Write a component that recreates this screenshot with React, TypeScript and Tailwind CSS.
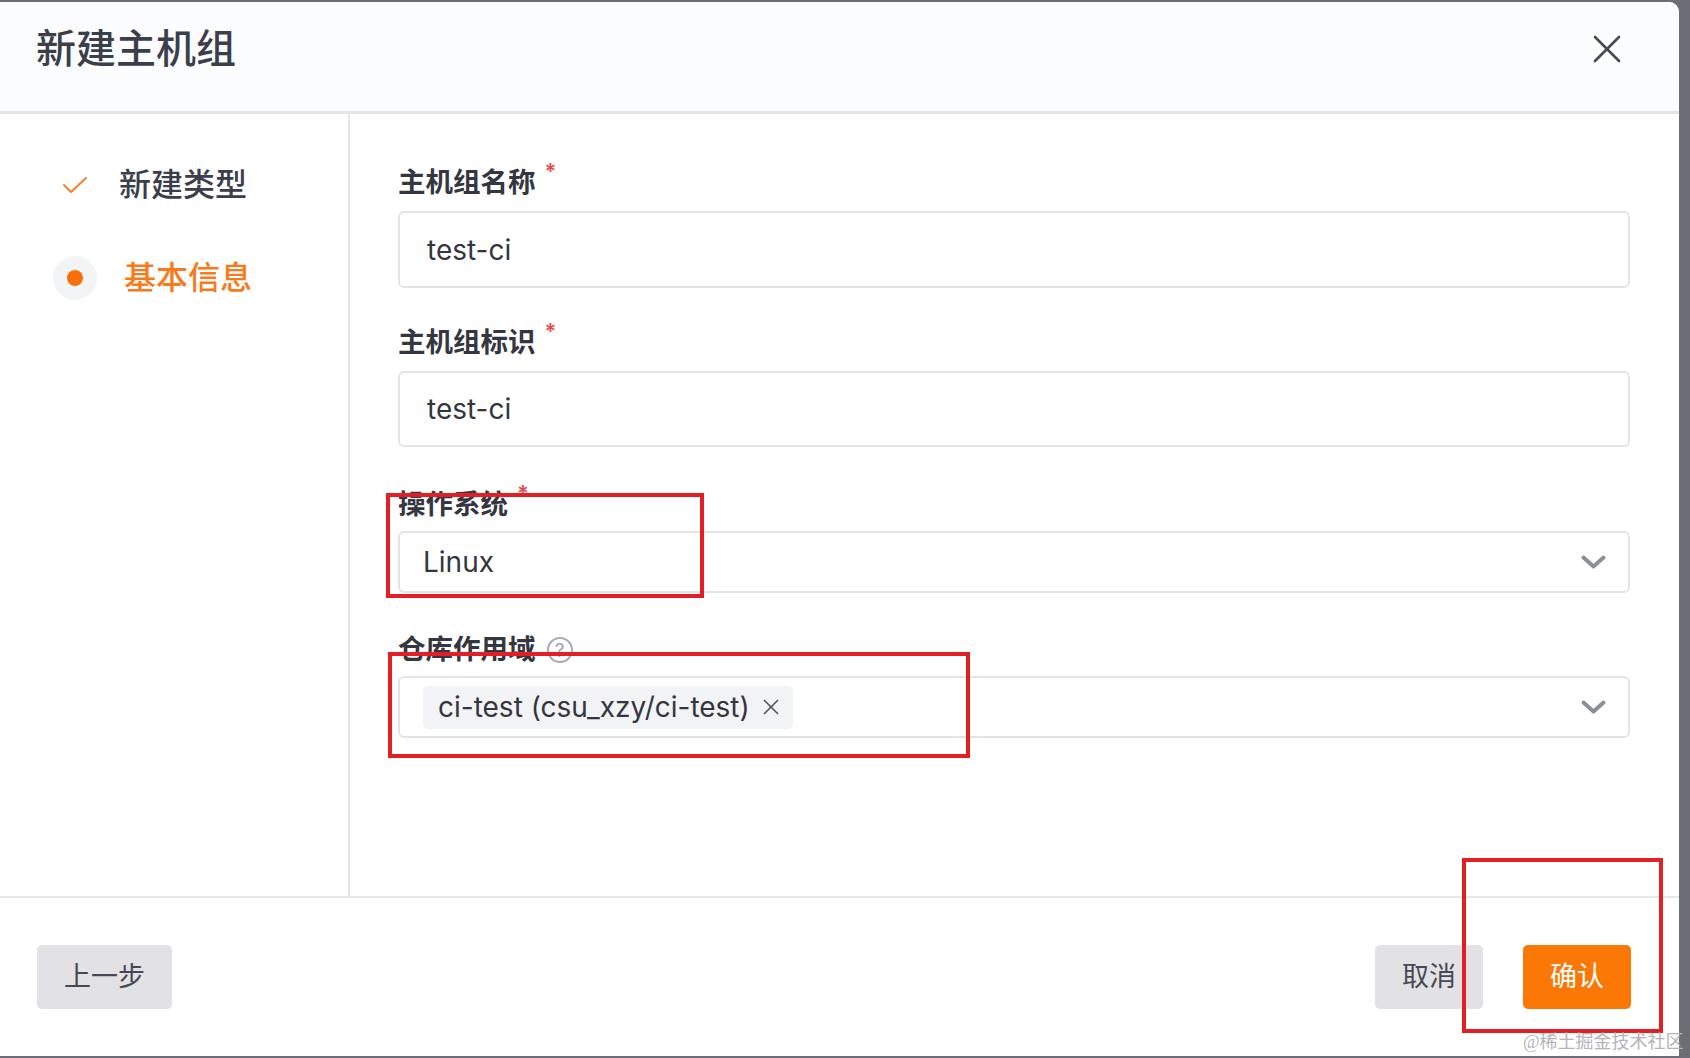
const font = "font-['Inter','Noto_Sans_CJK_SC',sans-serif]";

const Chevron = () => (
  <svg width="27" height="16" viewBox="0 0 27 16" fill="none">
    <polyline points="3.5,3.5 13.5,12.5 23.5,3.5" stroke="#8c8f99" strokeWidth="4" strokeLinecap="round" strokeLinejoin="round" />
  </svg>
);

const Required = () => (
  <span className="ml-[9px] text-[22px] leading-none text-[#e5484d] relative -top-[12px]">*</span>
);

const Label = ({ text, required, help }: { text: string; required?: boolean; help?: boolean }) => (
  <div className="flex items-center h-[40px] text-[27.5px] font-semibold text-[#343640]">
    <span>{text}</span>
    {required && <Required />}
    {help && (
      <span className="ml-[11px] w-[26px] h-[26px] rounded-full border-2 border-[#a9abb2] text-[#a2a4ab] text-[19px] leading-none flex items-center justify-center font-normal">
        ?
      </span>
    )}
  </div>
);

const TextInput = ({ value, h }: { value: string; h: string }) => (
  <div className={`${h} mt-[8px] border-2 border-[#e3e4e6] rounded-[6px] flex items-center pl-[27px] text-[28px] text-[#34363f]`}>
    {value}
  </div>
);

export default function App() {
  return (
    <div className={`${font} relative w-[1690px] h-[1058px] bg-[#6d6e75] overflow-hidden`}>
      <div className="w-[1679px] h-[1054px] mt-[2px] bg-white rounded-tr-[10px] flex flex-col overflow-hidden">
        {/* header */}
        <div className="h-[112px] shrink-0 bg-[#fbfcfd] border-b-[3px] border-[#e4e5e8] flex items-center justify-between pl-[36px] pr-[58px]">
          <h2 className="text-[40px] font-medium text-[#3b3e4b] -mt-[16px]">新建主机组</h2>
          <svg width="28" height="28" viewBox="0 0 28 28" className="-mt-[16px]">
            <line x1="2" y1="2" x2="26" y2="26" stroke="#464956" strokeWidth="2.6" strokeLinecap="round" />
            <line x1="26" y1="2" x2="2" y2="26" stroke="#464956" strokeWidth="2.6" strokeLinecap="round" />
          </svg>
        </div>

        {/* body */}
        <div className="flex flex-1 min-h-0">
          <div className="w-[350px] shrink-0 border-r-2 border-[#e6e7e9] pt-[49px]">
            <div className="flex items-center h-[44px] pl-[53px]">
              <div className="w-[44px] flex justify-center">
                <svg width="26" height="20" viewBox="0 0 26 20" fill="none">
                  <polyline points="2,10 9,17 24,3" stroke="#f7822a" strokeWidth="2" strokeLinecap="round" strokeLinejoin="round" />
                </svg>
              </div>
              <span className="ml-[22px] text-[32px] font-medium text-[#3b3e4b]">新建类型</span>
            </div>
            <div className="flex items-center h-[44px] pl-[53px] mt-[49px]">
              <div className="w-[44px] h-[44px] rounded-full bg-[#f3f4f6] flex items-center justify-center">
                <div className="w-[16px] h-[16px] rounded-full bg-[#f97008]" />
              </div>
              <span className="ml-[27px] text-[32px] font-medium text-[#f77a1b]">基本信息</span>
            </div>
          </div>

          <div className="flex-1 pl-[48px] pr-[49px] pt-[49px]">
            <Label text="主机组名称" required />
            <TextInput value="test-ci" h="h-[77px]" />

            <div className="mt-[35px]">
              <Label text="主机组标识" required />
              <TextInput value="test-ci" h="h-[76px]" />
            </div>

            <div className="mt-[38px]">
              <Label text="操作系统" required />
              <div className="h-[62px] mt-[6px] border-2 border-[#e3e4e6] rounded-[6px] flex items-center justify-between pl-[23px] pr-[21px] text-[28px] text-[#34363f]">
                <span>Linux</span>
                <Chevron />
              </div>
            </div>

            <div className="mt-[37px]">
              <Label text="仓库作用域" help />
              <div className="h-[62px] mt-[6px] border-2 border-[#e3e4e6] rounded-[6px] flex items-center justify-between pl-[23px] pr-[21px]">
                <div className="h-[43px] bg-[#f2f3f5] rounded-[5px] flex items-center pl-[15px] pr-[13px] gap-[12px] text-[28px] text-[#34363f]">
                  <span>ci-test (csu_xzy/ci-test)</span>
                  <svg width="18" height="18" viewBox="0 0 18 18">
                    <line x1="2" y1="2" x2="16" y2="16" stroke="#50535c" strokeWidth="1.6" />
                    <line x1="16" y1="2" x2="2" y2="16" stroke="#50535c" strokeWidth="1.6" />
                  </svg>
                </div>
                <Chevron />
              </div>
            </div>
          </div>
        </div>

        {/* footer */}
        <div className="h-[160px] shrink-0 border-t-2 border-[#e6e7e9] flex items-start justify-between pt-[47px] pl-[37px] pr-[48px]">
          <button className="w-[135px] h-[64px] rounded-[5px] bg-[#e2e2e4] text-[27px] text-[#464955]">上一步</button>
          <div className="flex gap-[40px]">
            <button className="w-[108px] h-[64px] rounded-[5px] bg-[#e2e2e4] text-[27px] text-[#464955]">取消</button>
            <button className="w-[108px] h-[64px] rounded-[5px] bg-[#fb7806] text-[27px] text-white">确认</button>
          </div>
        </div>
      </div>

      {/* annotation boxes */}
      <div className="absolute left-[386px] top-[493px] w-[318px] h-[105px] border-4 border-[#e31e24] pointer-events-none" />
      <div className="absolute left-[388px] top-[652px] w-[582px] h-[106px] border-4 border-[#e31e24] pointer-events-none" />
      <div className="absolute left-[1462px] top-[858px] w-[201px] h-[175px] border-4 border-[#e31e24] pointer-events-none" />

      <div className="absolute left-[1523px] top-[1030px] text-[18px] leading-[24px] text-[#b4b4b8] font-['Liberation_Serif','Noto_Sans_CJK_SC',serif]">
        @稀土掘金技术社区
      </div>
    </div>
  );
}
